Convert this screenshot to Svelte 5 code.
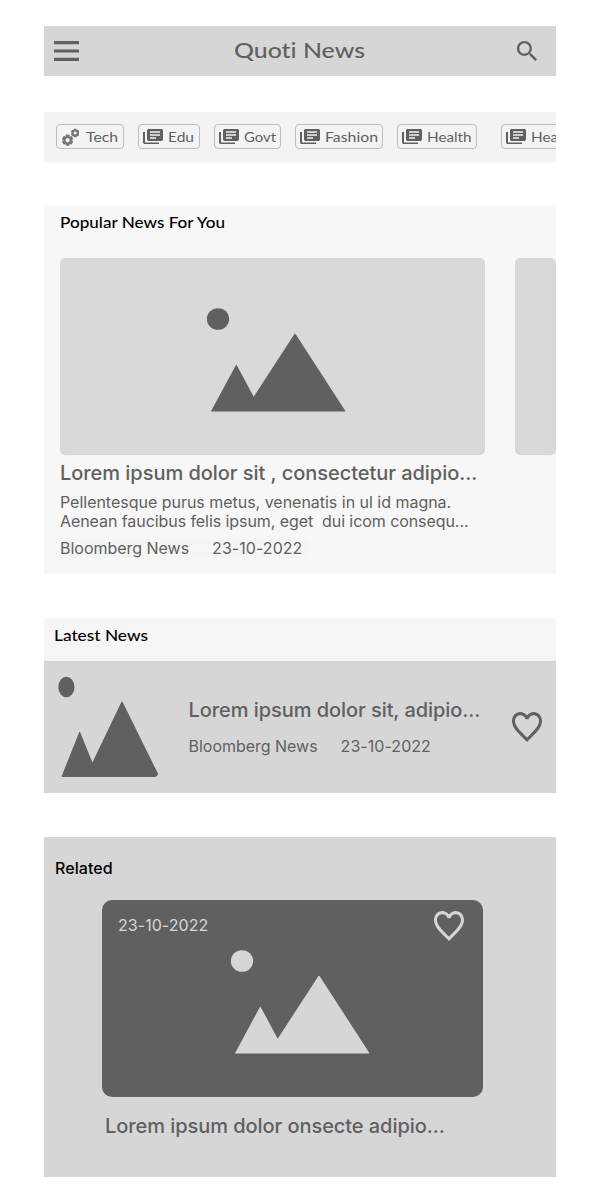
<script>
  const topics = [
    { name: 'Tech', text: 32, box: 68, gears: true },
    { name: 'Edu', text: 26, box: 62 },
    { name: 'Govt', text: 32, box: 67 },
    { name: 'Fashion', text: 53, box: 88 },
    { name: 'Health', text: 44.5, box: 80 },
    { name: 'Health', text: 44.5, box: 80, apart: true }
  ];

  function gear(cx, cy, outer, root) {
    const points = [];
    for (let i = 0; i < 6; i++) {
      const a = (i * Math.PI) / 3 - Math.PI / 2;
      for (const [r, d] of [[root, -0.32], [outer, -0.22], [outer, 0.22], [root, 0.32]]) {
        points.push(`${(cx + r * Math.cos(a + d)).toFixed(2)},${(cy + r * Math.sin(a + d)).toFixed(2)}`);
      }
    }
    return points.join(' ');
  }
</script>

{#snippet label(text, width, size, weight, height)}
  <svg class="label" {width} {height} aria-label={text}>
    <text x="0" y={height * 0.71} font-size={size} font-weight={weight} textLength={width} lengthAdjust="spacingAndGlyphs">{text}</text>
  </svg>
{/snippet}

{#snippet heart()}
  <svg class="heart" width="30" height="30" viewBox="2 3 20 18.35" preserveAspectRatio="none">
    <path d="M16.5 3c-1.74 0-3.41.81-4.5 2.09C10.91 3.81 9.24 3 7.5 3 4.42 3 2 5.42 2 8.5c0 3.78 3.4 6.86 8.55 11.54L12 21.35l1.45-1.32C18.6 15.36 22 12.28 22 8.5 22 5.42 19.58 3 16.5 3zm-4.4 15.55l-.1.1-.1-.1C7.14 14.24 4 11.39 4 8.5 4 6.5 5.5 5 7.5 5c1.54 0 3.04.99 3.57 2.36h1.87C13.46 5.99 14.96 5 16.5 5c2 0 3.5 1.5 3.5 3.5 0 2.89-3.14 5.74-7.9 10.05z" />
  </svg>
{/snippet}

{#snippet picture()}
  <svg width="140" height="104" viewBox="0 0 140 104">
    <ellipse cx="12" cy="11" rx="11.1" ry="10.8" />
    <path d="M5 103.2L29.7 57.4Q30.3 56.3 30.9 57.4L47.7 88.7L88.3 26.2Q89 25.1 89.7 26.2L139.2 102.7Q139.7 103.6 138.8 103.6H5.5Q4.7 103.6 5 103.2Z" />
  </svg>
{/snippet}

<main>
  <header>
    <svg width="25" height="20" viewBox="0 0 25 20"><path d="M0 0h25v3.2H0zM0 8.5h25v3H0zM0 16.8h25V20H0z" /></svg>
    {@render label('Quoti News', 131, 22, 500, 32)}
    <svg width="20" height="20" viewBox="3 3 17.49 17.49"><path d="M15.5 14h-.79l-.28-.27C15.41 12.59 16 11.11 16 9.5 16 5.91 13.09 3 9.5 3S3 5.91 3 9.5 5.91 16 9.5 16c1.61 0 3.09-.59 4.23-1.57l.27.28v.79l5 4.99L20.49 19l-4.99-5zm-6 0C7.01 14 5 11.99 5 9.5S7.01 5 9.5 5 14 7.01 14 9.5 11.99 14 9.5 14z" /></svg>
  </header>

  <nav>
    {#each topics as topic}
      <div class="chip" class:gears={topic.gears} class:apart={topic.apart} style="width: {topic.box}px">
        {#if topic.gears}
          <svg width="18" height="18" viewBox="0 0 18 18">
            <g fill="none" stroke="#757575" stroke-width="2" stroke-linejoin="round">
              <polygon points={gear(6.6, 12.2, 4.7, 3)} />
              <polygon points={gear(14.2, 5, 3.5, 2.3)} stroke-width="1.7" />
            </g>
          </svg>
        {:else}
          <svg width="20" height="15" viewBox="2 2 20 20" preserveAspectRatio="none"><path d="M4 6H2v14c0 1.1.9 2 2 2h14v-2H4V6zm16-4H8c-1.1 0-2 .9-2 2v12c0 1.1.9 2 2 2h12c1.1 0 2-.9 2-2V4c0-1.1-.9-2-2-2zm-1 9H9V9h10v2zm-4 4H9v-2h6v2zm4-8H9V5h10v2z" /></svg>
        {/if}
        {@render label(topic.name, topic.text, 13.5, 400, 22)}
      </div>
    {/each}
  </nav>

  <section class="popular">
    {@render label('Popular News For You', 165, 15.5, 500, 24)}
    <div class="reel">
      <div class="image">{@render picture()}</div>
      <div class="image next"></div>
    </div>
    <h2>Lorem ipsum dolor sit , consectetur adipio...</h2>
    <p>Pellentesque purus metus, venenatis in ul id magna.<br /><span class="second">Aenean faucibus felis ipsum, eget&nbsp; dui icom consequ...</span></p>
    <div class="meta"><span>Bloomberg News</span><span>23-10-2022</span></div>
  </section>

  <section class="latest">
    <div class="heading">{@render label('Latest News', 94, 15, 500, 24)}</div>
    <article>
      <svg width="102" height="102" viewBox="0 0 102 102">
        <ellipse cx="9.4" cy="11" rx="8.1" ry="10.3" />
        <path d="M4.8 99.8L22.2 56.2Q22.7 55.3 23.2 56.2L35.4 86.4L64.4 25.9Q65 24.9 65.6 25.9L100.8 97.3Q101.4 98.2 100.6 99.1L99.5 100.2Q98.7 101 97.5 101H5.4Q4.5 101 4.8 99.8Z" />
      </svg>
      <div class="story">
        <h2>Lorem ipsum dolor sit, adipio...</h2>
        <div class="meta"><span>Bloomberg News</span><span>23-10-2022</span></div>
      </div>
      {@render heart()}
    </article>
  </section>

  <section class="related">
    <h3>Related</h3>
    <div class="card">
      <div class="top"><span>23-10-2022</span>{@render heart()}</div>
      {@render picture()}
    </div>
    <h2>Lorem ipsum dolor onsecte adipio...</h2>
  </section>
</main>

<style>
  :global(body) { margin: 0; background: #fff; }
  main {
    box-sizing: border-box;
    width: 600px;
    height: 1200px;
    padding: 26px 44px 0;
    overflow: hidden;
    color: #606060;
    font: 400 16px/19px Inter, sans-serif;
  }
  svg { display: block; flex: none; fill: #606060; }
  .label { overflow: visible; font-family: Lato, sans-serif; font-variant-ligatures: none; }
  h2, h3, p { margin: 0; }
  h2 { font-size: 20px; font-weight: 500; line-height: 24px; letter-spacing: -0.04px; white-space: nowrap; }
  header {
    display: flex;
    align-items: center;
    justify-content: space-between;
    box-sizing: border-box;
    height: 50px;
    padding: 0 19px 0 10px;
    background: #d6d6d6;
  }
  header .label { margin-left: 3px; }
  nav {
    display: flex;
    align-items: flex-start;
    gap: 14px;
    box-sizing: border-box;
    height: 50px;
    margin-top: 36px;
    padding: 12px 0 0 12px;
    overflow: hidden;
    background: #f3f3f3;
  }
  .chip {
    display: flex;
    flex: none;
    align-items: center;
    gap: 5px;
    box-sizing: border-box;
    height: 25px;
    padding-left: 4px;
    border: 1px solid #bdbdbd;
    border-radius: 4px;
  }
  .chip.gears { gap: 7px; }
  .chip.apart { margin-left: 10px; }
  .popular {
    box-sizing: border-box;
    height: 368px;
    margin-top: 44px;
    padding: 5px 0 0 16px;
    overflow: hidden;
    background: #f7f7f7;
  }
  .popular > .label, .heading .label { fill: #000; }
  .reel { display: flex; gap: 30px; margin-top: 23px; }
  .image {
    display: flex;
    flex: none;
    box-sizing: border-box;
    width: 425px;
    height: 197px;
    padding: 50px 0 0 146px;
    border-radius: 5px;
    background: #d9d9d9;
  }
  .image.next { width: 41px; padding: 0; }
  .popular h2 { margin-top: 6px; }
  .popular p { margin-top: 8px; letter-spacing: -0.02px; white-space: nowrap; }
  .second { letter-spacing: -0.07px; }
  .meta { display: flex; gap: 23px; letter-spacing: -0.02px; white-space: nowrap; }
  .meta span + span, .top span { letter-spacing: 0.05px; }
  .popular .meta { width: 249px; margin-top: 8px; background: #f5f5f5; }
  .latest { margin-top: 44px; }
  .heading { height: 37px; padding: 6px 0 0 10px; background: #f5f5f5; }
  article {
    display: flex;
    box-sizing: border-box;
    height: 132px;
    padding: 15px 14.5px 0 13px;
    background: #d6d6d6;
  }
  .story { flex: 1; padding: 22px 0 0 29.5px; }
  .story h2 { letter-spacing: -0.06px; }
  .story .meta { margin-top: 15px; }
  article .heart { margin-top: 36px; }
  .related {
    box-sizing: border-box;
    height: 340px;
    margin-top: 44px;
    padding: 22px 0 0 11px;
    background: #d6d6d6;
  }
  h3 { color: #000; font-size: 16px; font-weight: 500; line-height: 19px; letter-spacing: 0.08px; }
  .card {
    box-sizing: border-box;
    width: 381px;
    height: 197px;
    margin: 22px 0 0 47px;
    padding: 11px 19px 0 16px;
    border-radius: 10px;
    background: #606060;
    color: #d6d6d6;
  }
  .card svg { fill: #d6d6d6; }
  .card > svg { margin: 9px 0 0 112px; }
  .top { display: flex; justify-content: space-between; }
  .top span { margin-top: 5px; }
  .related h2 { margin: 17px 0 0 50px; letter-spacing: -0.06px; }
</style>
